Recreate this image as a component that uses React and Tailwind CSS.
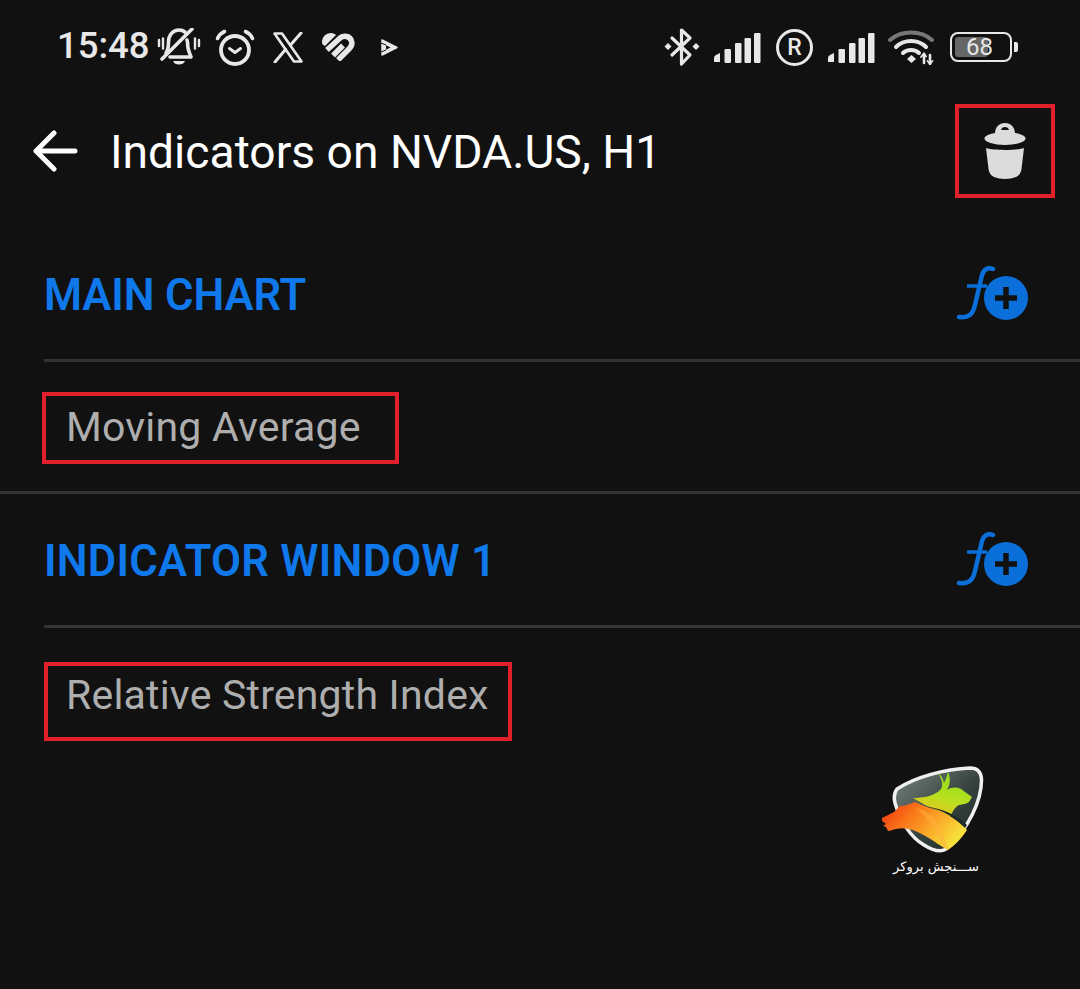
const BellOff = () => (
  <svg width="44" height="38" viewBox="0 0 44 38" fill="none" stroke="#e8e8e8" strokeWidth="3.600" strokeLinecap="round" strokeLinejoin="round">
    <path d="M2 12v6M6 10.500v10M42 12v6M38 10.500v10" strokeWidth="2.400" />
    <path d="M9 25c2-3 2.500-6 2.500-11C11.500 7 16 2 22 2c2.500 0 4.500.8 6 2" />
    <path d="M30 12c.5 1.500.7 3 .7 5 0 4 1.300 7 3.300 12H13" />
    <path d="M5 31 35 1" />
    <path d="M16 33h12c-1 2.500-3 3.500-6 3.500S17 35.500 16 33z" fill="#e8e8e8" stroke="none" />
  </svg>
);

const Alarm = () => (
  <svg width="40" height="37" viewBox="0 0 40 37" fill="none" stroke="#e8e8e8" strokeLinecap="round" strokeLinejoin="round">
    <circle cx="20" cy="21" r="14" strokeWidth="3.800" />
    <path d="M14.500 19.500 20 23.500l5.500-4" strokeWidth="3" />
    <path d="M2.500 9.500C4 6 6 4 9.500 2.500M37.500 9.500C36 6 34 4 30.500 2.500" strokeWidth="3.600" />
  </svg>
);

const XLogo = () => (
  <svg width="32" height="31" viewBox="0 0 32 31" fill="none" stroke="#e8e8e8">
    <path d="M2.500 1.500h7.500l19.500 28H22z" strokeWidth="2.600" strokeLinejoin="round" />
    <path d="M29 1 18.500 13M13.500 17.500 3 30" strokeWidth="3" strokeLinecap="round" />
  </svg>
);

const HeartStripes = () => (
  <svg width="34" height="28" viewBox="0 0 34 28" fill="none" stroke="#e8e8e8" strokeWidth="5.500">
    <path d="M1 9C1 3 6 0 10 0c2 0 4 1 5 2L4 13c-2-1-3-2-3-4z" fill="#e8e8e8" stroke="none" />
    <path d="M6 17 19 5c4-3 10-2 11.500 3 1 3-.5 6-2.500 8L17 27" />
    <path d="M12 22.500 22 12.500" />
  </svg>
);

const PlayLogo = () => (
  <svg width="18" height="17" viewBox="0 0 18 17" fill="none">
    <path d="M2 1 17 8.500 2 16z" fill="#e8e8e8" stroke="#e8e8e8" strokeWidth="1.500" strokeLinejoin="round" />
    <path d="M6 6.200 10.500 8.500 6 10.800z" fill="#111112" />
    <path d="M6 6 1 4M6 11 1 13" stroke="#111112" strokeWidth="1" />
  </svg>
);

const Bluetooth = () => (
  <svg width="36" height="40" viewBox="0 0 36 40" fill="none" stroke="#e8e8e8" strokeWidth="3.200" strokeLinejoin="round" strokeLinecap="round">
    <path d="M8 11 26 28 17.500 37V3L26 11 8 28" />
    <path d="M4 16l3.500 3.500L4 23 .5 19.500z" fill="#e8e8e8" stroke="none" />
    <path d="M32 16l3.500 3.500L32 23l-3.500-3.500z" fill="#e8e8e8" stroke="none" />
  </svg>
);

const Signal = () => (
  <svg width="48" height="31" viewBox="0 0 48 31" fill="#e8e8e8">
    <path d="M1 30v-4q0-2 2-3l4-2v9z" />
    <rect x="11.500" y="17" width="6.500" height="14" rx="1.200" />
    <rect x="22" y="11" width="6.500" height="20" rx="1.200" />
    <rect x="31.500" y="6" width="6.500" height="25" rx="1.200" />
    <rect x="41" y="1" width="6.500" height="30" rx="1.200" />
  </svg>
);

const RoamingR = () => (
  <div className="w-[37px] h-[37px] rounded-full border-[3.500px] border-[#e8e8e8] flex items-center justify-center text-[23px] leading-none font-medium text-[#e8e8e8]">
    R
  </div>
);

const Wifi = () => (
  <svg width="46" height="36" viewBox="0 0 46 36" fill="none" strokeLinecap="round">
    <path d="M2 11C13 1 33 1 44 11" stroke="#777777" strokeWidth="4" />
    <path d="M8 18C16 10 30 10 38 18" stroke="#e8e8e8" strokeWidth="4" />
    <path d="M15 24C19 20 27 20 31 24" stroke="#e8e8e8" strokeWidth="4" />
    <path d="M19 30 23.500 26 28 30 23.500 34z" fill="#e8e8e8" />
    <path d="M36 25v9M42 26v9" stroke="#e8e8e8" strokeWidth="2.600" />
    <path d="M33 28l3-3.500 2 3M39.500 32l2.500 3 2.500-3" stroke="#e8e8e8" strokeWidth="1.800" />
  </svg>
);

const Battery = () => (
  <div className="flex items-center gap-[2px]">
    <div className="relative w-[62px] h-[30px] rounded-[8px] border-[2.500px] border-[#e8e8e8] p-[3px]">
      <div className="w-[33px] h-full rounded-[3px] bg-[#666666]" />
      <span className="absolute inset-0 flex items-center justify-center text-[24px] leading-none text-[#e8e8e8] pr-[3px]">68</span>
    </div>
    <div className="w-[4px] h-[10px] rounded-r-[2px] bg-[#e8e8e8]" />
  </div>
);

const BackArrow = () => (
  <svg width="46" height="42" viewBox="0 0 46 42" fill="none" stroke="#ffffff" strokeWidth="5" strokeLinecap="round" strokeLinejoin="round">
    <path d="M43 21H4M22 3 4 21l18 18" />
  </svg>
);

const TrashIcon = () => (
  <svg width="42" height="56" viewBox="0 0 42 56" fill="#dcdcdc">
    <path d="M11 11C11 4 15 0 21 0s10 4 10 11zM17 7h8c-.6-2-2-3-4-3s-3.400 1-4 3z" fillRule="evenodd" />
    <ellipse cx="21" cy="15.500" rx="20.500" ry="6.500" />
    <path d="M2 25c7 2.500 31 2.500 38 0l-2.500 21c-.5 4-2.500 6.500-5.500 8-6 2.500-16 2.500-22 0-3-1.500-5-4-5.500-8z" />
  </svg>
);

const AddIndicator = () => (
  <svg width="74" height="60" viewBox="0 0 74 60" fill="none">
    <path d="M37 3c-5-2-9 0-11 6l-7 30c-2 9-6 13-16 12" stroke="#0a6fd8" strokeWidth="4.500" strokeLinecap="round" />
    <path d="M11 20h20" stroke="#0a6fd8" strokeWidth="3.500" />
    <circle cx="50" cy="32" r="22" fill="#0a6fd8" />
    <path d="M50 21v22M39 32h22" stroke="#111112" strokeWidth="5.500" />
  </svg>
);

const Logo = () => (
  <div className="absolute left-[880px] top-[765px] w-[104px] flex flex-col items-center">
    <svg width="104" height="90" viewBox="0 0 104 90">
      <defs>
        <linearGradient id="shield" x1="0" y1="0" x2="1" y2="1">
          <stop offset="0" stopColor="#7c8783" />
          <stop offset="0.55" stopColor="#34413d" />
          <stop offset="1" stopColor="#1f2a27" />
        </linearGradient>
        <linearGradient id="bull" x1="0.300" y1="1" x2="0.700" y2="0">
          <stop offset="0" stopColor="#f0c020" />
          <stop offset="0.45" stopColor="#b8e01e" />
          <stop offset="1" stopColor="#8edc1c" />
        </linearGradient>
        <linearGradient id="bear" x1="0" y1="0" x2="1" y2="0.500">
          <stop offset="0" stopColor="#f0300e" />
          <stop offset="0.4" stopColor="#fa7a1a" />
          <stop offset="0.75" stopColor="#fbb52c" />
          <stop offset="1" stopColor="#f7e03a" />
        </linearGradient>
      </defs>
      <path d="M17 24C35 12 65 4 90 3c8 0 11 4 11.500 11C102 35 88 65 66 84c-6 4-14 1-22-4C30 72 20 55 15 38c-1.500-6-1-10 2-14z" fill="url(#shield)" stroke="#f0f0f0" strokeWidth="3.500" />
      <path d="M33 33c10 0 22-2 28-9 3-5 0-11-3-16 4 3 5 6 6 10 2-4 3-7 4-11 3 6 2 13-1 18 5-3 9-3 14-1l11 8-3 5c-3 2-6 2-10 3-4 2-6 6-9 12-8-4-18-9-25-12z" fill="url(#bull)" />
      <path d="M2 53 14 47 20 41c5 0 10-2 15-4 5 2 9 4 12 5 14 4 30 11 40 23-5 8-12 15-19 20-6-3-14-9-21-13-7-4-12-7-19-8-4-1-8-1-12 0-3 .5-6 2-8 2l-2-4-3-1 3-2-4-3z" fill="url(#bear)" />
      <path d="M35 43C48 45 60 53 68 85l-5-3C56 63 46 50 35 43z" fill="#ffb040" opacity="0.500" />
      <path d="M47 42c12 2 27 9 38 21l2-3C76 49 60 43 47 42z" fill="#1f2a27" />
    </svg>
    <span className="text-[13px] leading-[18px] text-white font-['DejaVu_Sans',sans-serif] mt-[3px] ml-[8px]" dir="rtl">ســـنجش بروکر</span>
  </div>
);

const SectionHead = ({ title, className, titleClass }) => (
  <div className={`ml-[44px] pr-[50px] flex items-center justify-between border-b-[3px] border-[#333435] ${className}`}>
    <h2 className={`text-[43.500px] leading-none font-semibold text-[#0f78ea] ${titleClass}`}>{title}</h2>
    <AddIndicator />
  </div>
);

const App = () => {
  return (
    <div className="relative w-[1080px] h-[989px] bg-[#111112] overflow-hidden font-['Roboto',sans-serif]">
      {/* Status bar */}
      <div className="h-[94px] pl-[57px] pr-[62px] flex items-center justify-between">
        <div className="flex items-center">
          <span className="text-[36.500px] leading-none font-medium text-[#e8e8e8] mb-[2px]">15:48</span>
          <div className="ml-[7px] flex items-center">
            <BellOff />
            <div className="ml-[14px]"><Alarm /></div>
            <div className="ml-[17px]"><XLogo /></div>
            <div className="ml-[17px]"><HeartStripes /></div>
            <div className="ml-[25px]"><PlayLogo /></div>
          </div>
        </div>
        <div className="flex items-center">
          <Bluetooth />
          <div className="ml-[13px]"><Signal /></div>
          <div className="ml-[15px]"><RoamingR /></div>
          <div className="ml-[14px]"><Signal /></div>
          <div className="ml-[13px]"><Wifi /></div>
          <div className="ml-[16px]"><Battery /></div>
        </div>
      </div>

      {/* Header */}
      <div className="h-[113px] pl-[32px] pr-[25px] flex items-center">
        <BackArrow />
        <h1 className="ml-[32px] pt-[4px] text-[46.200px] leading-none text-white flex-1">Indicators on NVDA.US, H1</h1>
        <div className="w-[100px] h-[94px] border-[4px] border-[#e2202c] flex items-center justify-center">
          <TrashIcon />
        </div>
      </div>

      <SectionHead title="MAIN CHART" className="mt-[21px] h-[134px] pt-[4px]" titleClass="tracking-[-0.1px]" />

      <div className="border-b-[3px] border-[#333435] h-[132px] pl-[42px] pt-[2px] flex items-center">
        <div className="w-[357px] h-[72px] pl-[20px] border-[4px] border-[#e2202c] flex items-center text-[41px] leading-none tracking-[0.2px] text-[#aeaeae]">
          Moving Average
        </div>
      </div>

      <SectionHead title="INDICATOR WINDOW 1" className="h-[134px] pt-[5px]" titleClass="tracking-[0.28px]" />

      <div className="pt-[34px] pl-[44px]">
        <div className="w-[468px] h-[79px] pl-[18px] pb-[12px] border-[4px] border-[#e2202c] flex items-center text-[41px] leading-none tracking-[0.2px] text-[#aeaeae]">
          Relative Strength Index
        </div>
      </div>

      <Logo />
    </div>
  );
};

export default App;
